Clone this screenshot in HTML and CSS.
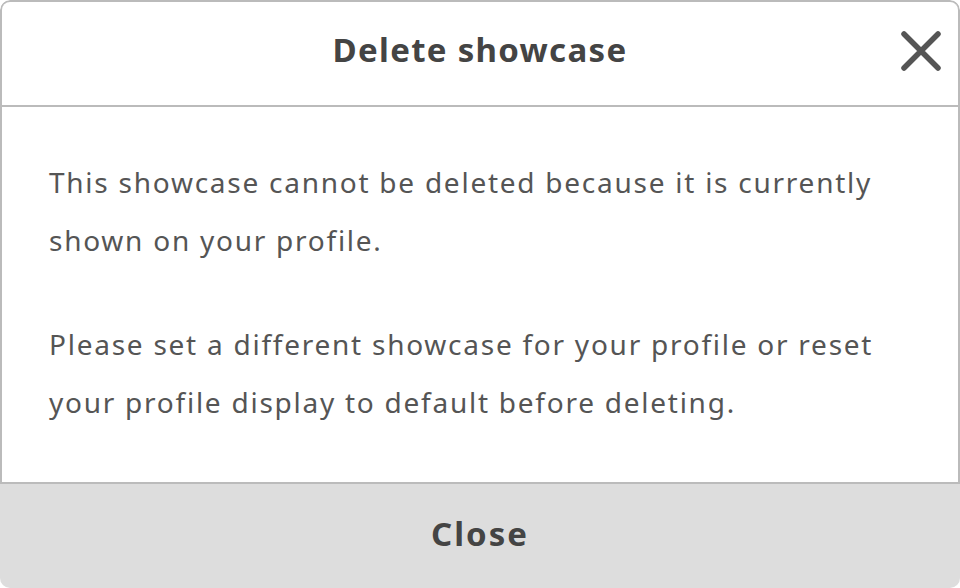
FILE: index.html
```html
<!DOCTYPE html>
<html lang="en">
<head>
<meta charset="utf-8">
<link rel="stylesheet" href="styles.css">
</head>
<body>
<div class="modal">
  <div class="panel">
    <header class="modal-header">
      <h1 class="modal-title">Delete showcase</h1>
      <button class="close-x" aria-label="Close">
        <svg width="40" height="40" viewBox="0 0 40 40"><path d="M3 3 L37 37 M37 3 L3 37" stroke="#555" stroke-width="5.5" stroke-linecap="round" fill="none"/></svg>
      </button>
    </header>
    <div class="modal-body">
      <p>This showcase cannot be deleted because it is currently shown on your profile.</p>
      <p>Please set a different showcase for your profile or reset your profile display to default before deleting.</p>
    </div>
  </div>
  <footer class="modal-footer">Close</footer>
</div>
</body>
</html>
```
FILE: styles.css
```css
html, body {
  margin: 0;
  padding: 0;
  background: #fff;
}
.modal {
  width: 960px;
  height: 588px;
  display: flex;
  flex-direction: column;
  border-radius: 10px;
  overflow: hidden;
  font-family: "Noto Sans", sans-serif;
}
.panel {
  flex: 1;
  display: flex;
  flex-direction: column;
  border: 2px solid #bbb;
  border-bottom: none;
  border-radius: 10px 10px 0 0;
}
.modal-header {
  height: 105px;
  padding-bottom: 8px;
  box-sizing: border-box;
  border-bottom: 2px solid #bbb;
  display: flex;
  align-items: center;
  justify-content: center;
  position: relative;
}
.modal-title {
  margin: 0;
  font-size: 33px;
  font-weight: 700;
  color: #444;
  letter-spacing: 1.3px;
}
.close-x {
  position: absolute;
  right: 17px;
  top: 29px;
  width: 40px;
  height: 40px;
  padding: 0;
  border: none;
  background: none;
}
.close-x svg { display: block; }
.modal-body {
  flex: 1;
  padding: 46px 50px 0 47px;
}
.modal-body p {
  margin: 0 0 46px;
  font-size: 28px;
  line-height: 58px;
  color: #555;
  letter-spacing: 1.75px;
}
.modal-footer {
  height: 106px;
  padding-bottom: 6px;
  box-sizing: border-box;
  border-top: 2px solid #bbb;
  background: #ddd;
  display: flex;
  align-items: center;
  justify-content: center;
  font-size: 33px;
  font-weight: 700;
  color: #444;
  letter-spacing: 2px;
}
```
